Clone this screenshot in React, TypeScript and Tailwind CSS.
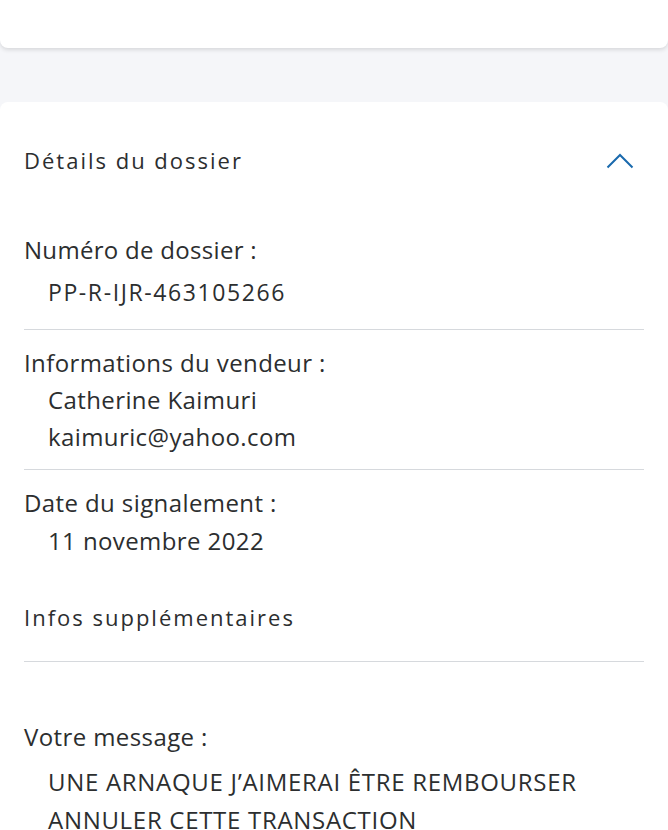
const font = { fontFamily: '"Open Sans", "Noto Sans", sans-serif' };

function Divider() {
  return <div className="h-px bg-[#d6d9dd]" />;
}

export default function App() {
  return (
    <div className="h-[830px] w-[668px] overflow-hidden bg-[#f5f6f9] text-[#2c2e2f]" style={font}>
      <div className="h-[48px] rounded-b-lg bg-white shadow-[0_2px_4px_rgba(0,0,0,0.12)]" />
      <div className="mt-[54px] rounded-t-lg bg-white px-6 pt-[40px]">
        <div className="flex items-center justify-between">
          <h2 className="text-[22px] leading-[37px] tracking-[2px]">Détails du dossier</h2>
          <svg className="mr-[10px] h-4 w-7" viewBox="0 0 28 16" fill="none">
            <path d="M1.5 14.5L14 2l12.5 12.5" stroke="#1a6aad" strokeWidth="2" />
          </svg>
        </div>

        <div className="mt-[52px] text-[24px] leading-[37px] tracking-[0.3px]">Numéro de dossier :</div>
        <div className="mt-[6px] pl-6 text-[23px] leading-[37px] tracking-[1.6px]">PP-R-IJR-463105266</div>
        <div className="mt-[18px]"><Divider /></div>

        <div className="mt-[14px] text-[24px] leading-[37px] tracking-[0.4px]">Informations du vendeur :</div>
        <div className="pl-6 text-[24px] leading-[37px] tracking-[0.4px]">
          <div>Catherine Kaimuri</div>
          <div>kaimuric@yahoo.com</div>
        </div>
        <div className="mt-[14px]"><Divider /></div>

        <div className="mt-[14px] text-[24px] leading-[37px] tracking-[0.4px]">Date du signalement :</div>
        <div className="mt-px pl-6 text-[24px] leading-[37px] tracking-[0.4px]">11 novembre 2022</div>

        <div className="mt-[40px] text-[22px] leading-[37px] tracking-[2px]">Infos supplémentaires</div>
        <div className="mt-[25px]"><Divider /></div>

        <div className="mt-[56px] text-[24px] leading-[37px] tracking-[0.4px]">Votre message :</div>
        <div className="mt-[8px] pl-6 text-[24px] leading-[38px] tracking-[0.7px]">
          <div>UNE ARNAQUE J’AIMERAI ÊTRE REMBOURSER</div>
          <div>ANNULER CETTE TRANSACTION</div>
        </div>
      </div>
    </div>
  );
}
